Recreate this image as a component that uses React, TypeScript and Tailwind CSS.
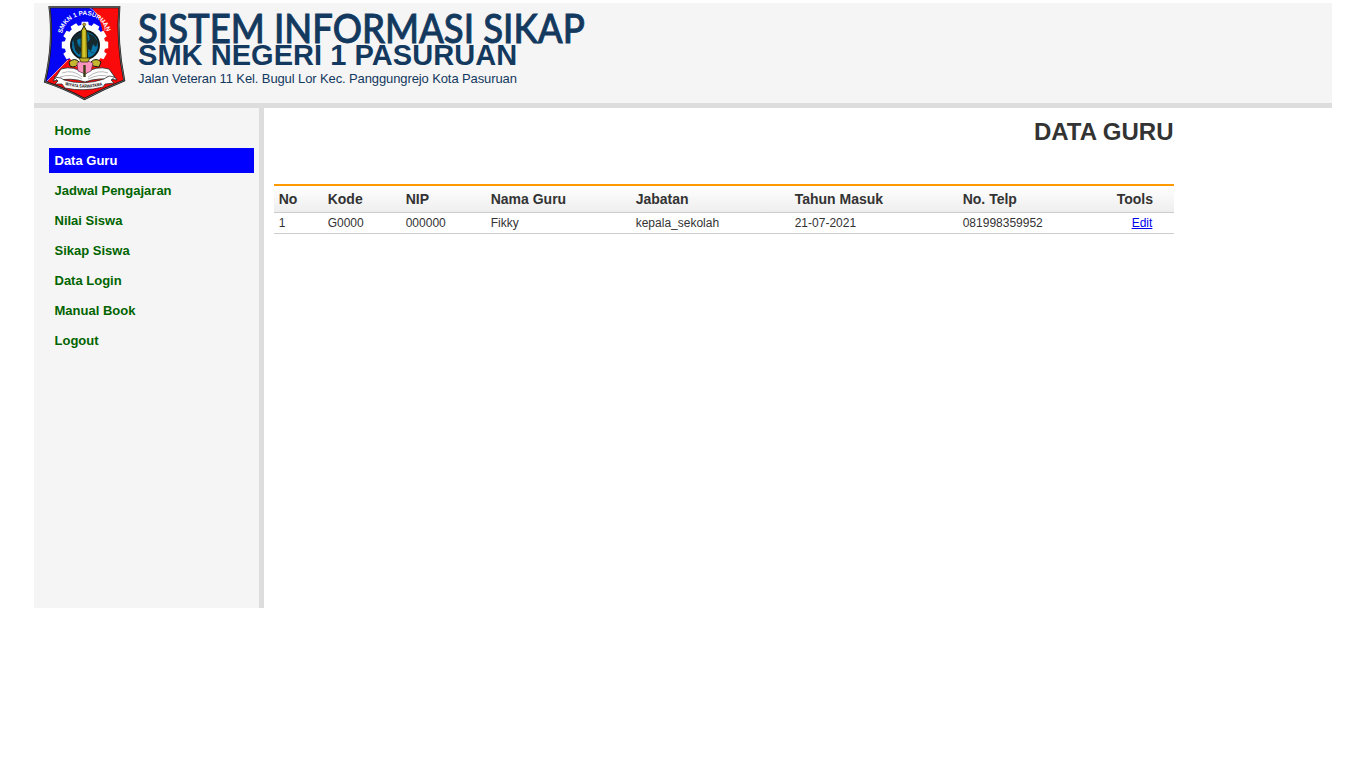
const menu = [
  { label: 'Home' },
  { label: 'Data Guru', active: true },
  { label: 'Jadwal Pengajaran' },
  { label: 'Nilai Siswa' },
  { label: 'Sikap Siswa' },
  { label: 'Data Login' },
  { label: 'Manual Book' },
  { label: 'Logout' },
];

const columns = [
  { title: 'No', width: 'w-[49px]' },
  { title: 'Kode', width: 'w-[78px]' },
  { title: 'NIP', width: 'w-[85px]' },
  { title: 'Nama Guru', width: 'w-[145px]' },
  { title: 'Jabatan', width: 'w-[159px]' },
  { title: 'Tahun Masuk', width: 'w-[168px]' },
  { title: 'No. Telp', width: 'w-[154px]' },
  { title: 'Tools', width: 'w-[62px]' },
];

const teachers = [['1', 'G0000', '000000', 'Fikky', 'kepala_sekolah', '21-07-2021', '081998359952']];

const teeth = [0, 30, 60, 90, 120, 150, 180, 210, 240, 270, 300, 330];

const shield = 'M15.5 7.3H85.3Q82.5 42 90.2 80.5Q70 88.5 50.5 99Q31 88.5 11 81.8Q20 42 15.5 7.3Z';

function Crest() {
  return (
    <svg className="block h-[100px] w-[100px] shrink-0" viewBox="0 3 100 100" aria-label="SMKN 1 Pasuruan">
      <defs>
        <clipPath id="shield">
          <path d={shield} />
        </clipPath>
        <path id="arc" d="M28 33.5A23.2 23.2 0 0 1 73.5 34" />
        <path id="ribbonArc" d="M31 85Q50 90.5 69.5 85" />
      </defs>
      <g clipPath="url(#shield)">
        <rect width="100" height="104" fill="#fa0a0a" />
        <path d="M0 0H52C61 11 68 20 69 36L50 55L33 60L10 85H0Z" fill="#0505f5" />
        <path d="M53 6C64 13 71 21 71 31M10 84L34 60" fill="none" stroke="#fff" strokeWidth=".6" />
      </g>
      <path d={shield} fill="none" stroke="#111" strokeWidth="2" />
      <path d={shield} fill="none" stroke="#999" strokeWidth=".6" />
      <text fill="#fff" fontFamily="Liberation Sans" fontSize="6.3" fontWeight="bold">
        <textPath href="#arc" textLength="61">SMKN 1 PASURUAN</textPath>
      </text>
      <g fill="#fff">
        {teeth.map((a) => (
          <path key={a} d="M46.6 29L47.8 21.8H54.2L55.4 29Z" transform={`rotate(${a} 51 45)`} />
        ))}
        <circle cx="51" cy="45" r="20.4" />
      </g>
      <circle cx="51" cy="45" r="15" fill="#101820" />
      <circle cx="51" cy="45" r="13" fill="#0876a8" />
      <path d="M39 39L43 34L48 33L47 38L43 40L44 45L48 49L45 55L41 50ZM54 33L60 36L64 42L62 47L59 44L57 51L54 49L53 43L56 39Z" fill="#15282c" />
      <path d="M38 45H64M42 37Q51 41 60 37M42 53Q51 49 60 53" fill="none" stroke="#113844" strokeWidth=".6" />
      <path d="M27 69Q40 65 51 74Q61 65 75 69L83 80Q64 77 51 82Q38 77 19 81Z" fill="#fff" stroke="#222" strokeWidth=".8" />
      <path d="M28 73Q39 69 48 77M26 77Q38 73 48 79M54 77Q64 69 74 73M54 79Q66 73 76 77" fill="none" stroke="#888" strokeWidth=".6" />
      <path d="M35 62Q41 57 45 62Q42 69 36 66ZM57 62Q62 57 67 62L65 67L59 66Z" fill="#c5b72f" stroke="#171b15" strokeWidth="1" />
      <path d="M43 63L47 61H54L59 63L57 71L51 74L44 71Z" fill="#ff93bf" stroke="#552443" strokeWidth=".6" />
      <path d="M47.2 31L50 26L52.8 31L53.6 61H47Z" fill="#b8a815" stroke="#18200b" strokeWidth="1" />
      <path d="M50 30V61" stroke="#eee34d" strokeWidth="1" />
      <circle cx="50.2" cy="24.5" r="1.5" fill="#bda719" stroke="#222" strokeWidth=".5" />
      <path d="M45 58H56L54 62H47Z" fill="#c4b32b" stroke="#1c210d" strokeWidth=".7" />
      <path d="M50.5 65V77" stroke="#393d12" strokeWidth="2.4" />
      <path d="M20 77L27 78L30 80Q50 86 70 79L75 76L81 77L77 80L80 83L71 84L69 87Q50 92 31 88L28 84L21 84L24 81Z" fill="#fff" stroke="#222" strokeWidth=".7" />
      <text fill="#111" fontFamily="Liberation Sans" fontSize="4.6" fontWeight="bold">
        <textPath href="#ribbonArc" textLength="38" lengthAdjust="spacingAndGlyphs">WIYATA SARWATAMA</textPath>
      </text>
    </svg>
  );
}

export default function App() {
  return (
    <div className="mx-auto w-[1298px] pt-[3px] font-['Liberation_Sans',Arial,sans-serif] text-[#333]">
      <header className="flex h-[105px] border-b-[5px] border-[#ddd] bg-[#f5f5f5] text-[#13395f]">
        <Crest />
        <div className="flex flex-col items-start pt-[5px] pl-1 whitespace-nowrap">
          <div className="h-[34px] origin-left scale-x-[0.912] font-['Lato',sans-serif] text-[40px] leading-[40px] font-medium [-webkit-text-stroke:0.9px_#13395f]">SISTEM INFORMASI SIKAP</div>
          <div className="h-[28px] text-[29px] leading-[27px] font-bold tracking-[0.05px]">SMK NEGERI 1 PASURUAN</div>
          <div className="text-[13px] leading-[18px] tracking-[-0.11px]">Jalan Veteran 11 Kel. Bugul Lor Kec. Panggungrejo Kota Pasuruan</div>
        </div>
      </header>
      <div className="flex">
        <aside className="h-[500px] w-[230px] shrink-0 border-r-[5px] border-[#ddd] bg-[#f5f5f5]">
          <nav className="flex flex-col gap-[5px] pt-[10px] pr-[5px] pl-[15px]">
            {menu.map((item) => (
              <a
                key={item.label}
                className={`block h-[25px] pl-[5.5px] text-[13px] leading-[25px] font-bold ${item.active ? 'bg-[#0000ff] text-white' : 'text-[#006400]'}`}
              >
                {item.label}
              </a>
            ))}
          </nav>
        </aside>
        <main className="w-[910px] pl-[10px]">
          <h1 className="h-[76px] pt-[10px] pr-[0.5px] text-right text-2xl leading-[28px] font-bold">DATA GURU</h1>
          <table className="w-[900px] table-fixed border-separate border-spacing-0 text-left">
            <thead>
              <tr>
                {columns.map((c) => (
                  <th key={c.title} className={`${c.width} h-[29px] border-t-2 border-b border-t-[#ff9900] border-b-[#ccc] bg-linear-to-b from-white to-[#eee] p-0 pl-[4.7px] text-sm leading-[26px] font-bold`}>
                    {c.title}
                  </th>
                ))}
              </tr>
            </thead>
            <tbody>
              {teachers.map((row) => (
                <tr key={row[0]}>
                  {row.map((value, i) => (
                    <td key={i} className="h-[21px] border-b border-[#ccc] p-0 pl-[4.7px] text-xs leading-5">{value}</td>
                  ))}
                  <td className="border-b border-[#ccc] p-0 pr-[2px] text-center text-xs leading-5">
                    <a className="text-[#0000ee] underline">Edit</a>
                  </td>
                </tr>
              ))}
            </tbody>
          </table>
        </main>
      </div>
    </div>
  );
}
